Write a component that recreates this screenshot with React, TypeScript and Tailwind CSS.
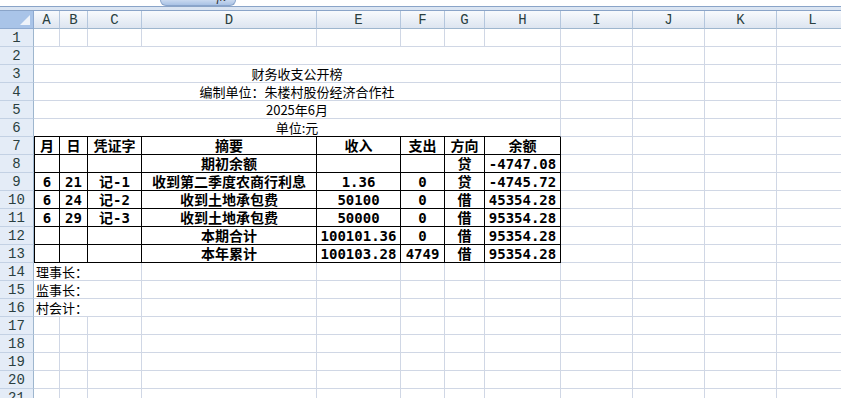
import React from "react";

const COLS = ["A", "B", "C", "D", "E", "F", "G", "H", "I", "J", "K", "L"];

const GRID =
  "grid grid-cols-[34px_26px_28px_54px_175px_84px_44px_40px_76px_72px_72px_72px_72px] auto-rows-[18px]";

const G = "border-r border-b border-[#d0d7e5]";
const T = "border-r border-b border-black";
const TL = "border-l border-r border-b border-black";

const TABLE: string[][] = [
  ["月", "日", "凭证字", "摘要", "收入", "支出", "方向", "余额"],
  ["", "", "", "期初余额", "", "", "贷", "-4747.08"],
  ["6", "21", "记-1", "收到第二季度农商行利息", "1.36", "0", "贷", "-4745.72"],
  ["6", "24", "记-2", "收到土地承包费", "50100", "0", "借", "45354.28"],
  ["6", "29", "记-3", "收到土地承包费", "50000", "0", "借", "95354.28"],
  ["", "", "", "本期合计", "100101.36", "0", "借", "95354.28"],
  ["", "", "", "本年累计", "100103.28", "4749", "借", "95354.28"],
];

const TITLES: Record<number, string> = {
  3: "财务收支公开榜",
  4: "编制单位：朱楼村股份经济合作社",
  5: "2025年6月",
  6: "单位:元",
};

const SIGN: Record<number, string> = {
  14: "理事长：",
  15: "监事长：",
  16: "村会计：",
};

const tableText =
  "flex items-center justify-center overflow-hidden whitespace-nowrap font-bold text-[14px] leading-none text-black font-['DejaVu_Sans_Mono','Noto_Sans_CJK_SC',monospace]";
const plainText =
  "flex items-center overflow-hidden whitespace-nowrap text-[13px] leading-none text-black font-['Noto_Sans_CJK_SC',sans-serif]";

function RowHeader({ n }: { n: number }) {
  return (
    <div className="flex items-center justify-center bg-[#e4ecf7] border-r border-b border-r-[#9eb6ce] border-b-[#c3d1e4] font-['Liberation_Mono',monospace] text-[14px] leading-none text-[#2a3f40]">
      {n}
    </div>
  );
}

function Empty({ count, start }: { count: number; start: number }) {
  return (
    <>
      {Array.from({ length: count }).map((_, i) => (
        <div key={start + i} className={G} />
      ))}
    </>
  );
}

function Row({ r }: { r: number }) {
  if (r === 2) {
    return (
      <>
        <RowHeader n={r} />
        <div className={`col-span-8 ${G}`} />
        <Empty count={4} start={8} />
      </>
    );
  }
  if (TITLES[r]) {
    const bottom =
      r === 6
        ? "border-r border-b border-r-[#d0d7e5] border-b-black"
        : G;
    return (
      <>
        <RowHeader n={r} />
        <div className={`col-span-8 justify-center ${bottom} ${plainText}`}>
          {TITLES[r]}
        </div>
        <Empty count={4} start={8} />
      </>
    );
  }
  if (r >= 7 && r <= 13) {
    const data = TABLE[r - 7];
    return (
      <>
        <RowHeader n={r} />
        {data.map((v, i) => (
          <div key={i} className={`${i === 0 ? TL : T} ${tableText}`}>
            {v}
          </div>
        ))}
        <Empty count={4} start={8} />
      </>
    );
  }
  if (SIGN[r]) {
    return (
      <>
        <RowHeader n={r} />
        <div className={`col-span-3 pl-[2px] ${G} ${plainText}`}>{SIGN[r]}</div>
        <Empty count={9} start={3} />
      </>
    );
  }
  return (
    <>
      <RowHeader n={r} />
      <Empty count={12} start={0} />
    </>
  );
}

export default function App() {
  return (
    <div className="w-[841px] h-[398px] overflow-hidden bg-white">
      {/* formula bar (cut off) */}
      <div className="flex h-[6px] bg-white">
        <div className="w-[160px] h-[6px] overflow-hidden flex justify-start pl-[61px]">
          <div className="-mt-[10px] text-[13px] leading-[14px] font-['Liberation_Mono',monospace] text-[#222]">
            H1
          </div>
        </div>
        <div className="w-[76px] h-[6px] overflow-hidden rounded-b-[7px] border border-t-0 border-[#8aa5cb] bg-gradient-to-b from-[#c9d9ef] to-[#a9c2e5] flex justify-end pr-[9px]">
          <div className="-mt-[10px] text-[13px] leading-[14px] italic font-['Liberation_Serif',serif] text-[#333]">
            fx
          </div>
        </div>
        <div className="flex-1" />
      </div>
      <div className="h-px bg-[#8aa4c8]" />
      <div className="h-[3px] bg-[#dbe5f2]" />
      <div className="h-px bg-[#8aa4c8]" />
      <div className={GRID}>
        {/* column header row */}
        <div className="flex items-end justify-end bg-[#a9c4e8] border-r border-b border-r-[#8eaad0] border-b-[#8eaad0] pr-[3px] pb-[3px]">
          <svg width="10" height="10" viewBox="0 0 10 10">
            <polygon points="10,0 10,10 0,10" fill="#eef3fa" />
          </svg>
        </div>
        {COLS.map((c) => (
          <div
            key={c}
            className="flex items-center justify-center bg-gradient-to-b from-[#f8fafd] to-[#dde5f0] border-r border-b border-r-[#b4c6dd] border-b-[#9eb6ce] font-['Liberation_Mono',monospace] text-[14px] leading-none text-[#2a3f40]"
          >
            {c}
          </div>
        ))}
        {Array.from({ length: 21 }).map((_, i) => (
          <Row key={i + 1} r={i + 1} />
        ))}
      </div>
    </div>
  );
}
